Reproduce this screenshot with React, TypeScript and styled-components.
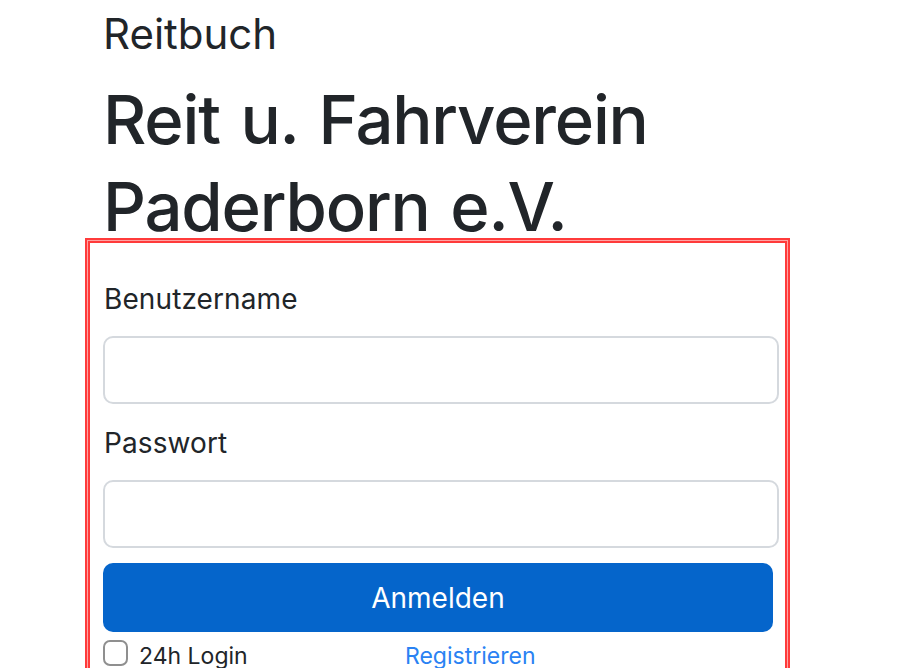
import React from "react";
import styled, { createGlobalStyle } from "styled-components";

const GlobalStyle = createGlobalStyle`
  * { box-sizing: border-box; }
  html, body { margin: 0; padding: 0; background: #ffffff; }
  body {
    font-family: Inter, "Noto Sans", "Liberation Sans", sans-serif;
    color: #212529;
  }
`;

const Page = styled.main`
  display: flex;
  flex-direction: column;
  padding: 9px 0 0 88px;
  width: 787px;
`;

const Brand = styled.div`
  padding-left: 15px;
  font-size: 42px;
  line-height: 50px;
  font-weight: 400;
  letter-spacing: 0;
`;

const Title = styled.h1`
  margin: 17px 0 0;
  padding-left: 15px;
  font-size: 67px;
  line-height: 87px;
  font-weight: 500;
  letter-spacing: -1.2px;
  word-spacing: 4px;
`;

const FormBox = styled.form`
  margin-top: -9px;
  display: flex;
  flex-direction: column;
  padding: 39px 6px 40px 13px;
  border: 2px solid #ff3b3b;
  box-shadow: 0 0 0 1px #ffa3a3, 0 0 0 3px #ff3b3b;
`;

const Label = styled.label<{ $top?: number }>`
  display: block;
  margin: ${(p) => p.$top ?? 0}px 0 20px 1px;
  font-size: 28px;
  line-height: 34px;
  letter-spacing: 0.1px;
`;

const Input = styled.input`
  display: block;
  width: 100%;
  height: 68px;
  border: 2px solid #d5d9de;
  border-radius: 10px;
  background: #fff;
  font: inherit;
  font-size: 28px;
  padding: 0 16px;
  outline: none;
`;

const SubmitButton = styled.button`
  margin: 15px 6px 0 0;
  height: 69px;
  border: none;
  border-radius: 10px;
  background: #0565cb;
  color: #ffffff;
  font-family: inherit;
  font-size: 28px;
  letter-spacing: 0;
  cursor: pointer;
`;

const OptionsRow = styled.div`
  margin-top: 8px;
  display: grid;
  grid-template-columns: 302px 1fr;
  align-items: start;
`;

const CheckLabel = styled.label`
  display: flex;
  align-items: flex-start;
  gap: 11px;
`;

const CheckBox = styled.span`
  display: block;
  flex: none;
  width: 25px;
  height: 26px;
  border: 2px solid #8f8f8f;
  border-radius: 7px;
  background: #fff;
`;

const OptionText = styled.span`
  display: block;
  margin-top: 4px;
  font-size: 23px;
  line-height: 24px;
`;

const Link = styled.a`
  display: block;
  margin-top: 4px;
  color: #2a82f3;
  text-decoration: none;
  font-size: 23px;
  line-height: 24px;
`;

export default function App() {
  return (
    <>
      <GlobalStyle />
      <Page>
        <Brand>Reitbuch</Brand>
        <Title>
          Reit u. Fahrverein
          <br />
          Paderborn e.V.
        </Title>
        <FormBox onSubmit={(e) => e.preventDefault()}>
          <Label htmlFor="user">Benutzername</Label>
          <Input id="user" type="text" />
          <Label htmlFor="pass" $top={22}>
            Passwort
          </Label>
          <Input id="pass" type="password" />
          <SubmitButton type="submit">Anmelden</SubmitButton>
          <OptionsRow>
            <CheckLabel>
              <CheckBox />
              <OptionText>24h Login</OptionText>
            </CheckLabel>
            <Link href="#">Registrieren</Link>
          </OptionsRow>
        </FormBox>
      </Page>
    </>
  );
}
